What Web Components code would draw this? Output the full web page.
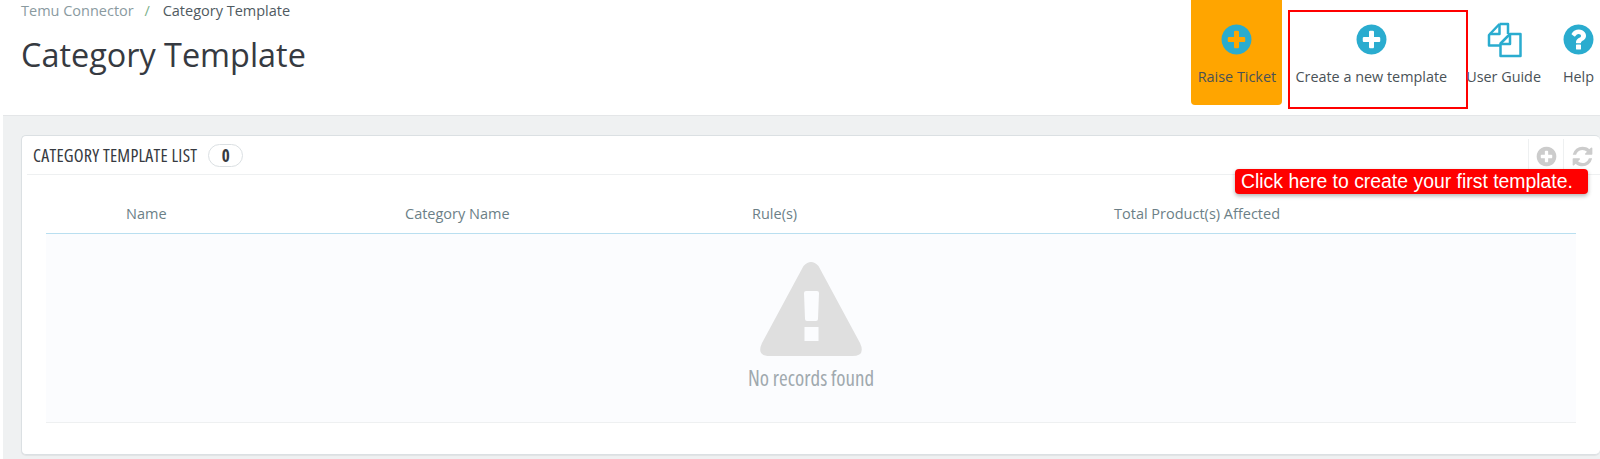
<!DOCTYPE html>
<html>
<head>
<meta charset="utf-8">
<title>Category Template</title>
<style>
  html, body { margin: 0; height: 459px; overflow: hidden; background: #fff; }
  body { font-family: "Open Sans", sans-serif; color: #363a41; }
</style>
</head>
<body>
<page-header heading="Category Template">
  <toolbar-button label="Raise Ticket" icon="plus" orange></toolbar-button>
  <toolbar-button label="Create a new template" icon="plus" highlight></toolbar-button>
  <toolbar-button label="User Guide" icon="docs"></toolbar-button>
  <toolbar-button label="Help" icon="help"></toolbar-button>
</page-header>
<page-body>
  <list-panel heading="CATEGORY TEMPLATE LIST" count="0" hint="Click here to create your first template.">
    <list-table>
      <span>Name</span><span>Category Name</span><span>Rule(s)</span><span>Total Product(s) Affected</span>
      <empty-state slot="empty">No records found</empty-state>
    </list-table>
  </list-panel>
</page-body>

<script>
// font-awesome 4 shapes, 1792 box
const BLUE = "#2aaccf";
const PLUS_D = "M1344 960v-128q0-26-19-45t-45-19h-256v-256q0-26-19-45t-45-19h-128q-26 0-45 19t-19 45v256h-256q-26 0-45 19t-19 45v128q0 26 19 45t45 19h256v256q0 26 19 45t45 19h128q26 0 45-19t19-45v-256h256q26 0 45-19t19-45zm320-64q0 209-103 385.500t-279.500 279.500-385.500 103-385.500-103-279.500-279.500-103-385.500 103-385.500 279.500-279.500 385.500-103 385.500 103 279.500 279.500 103 385.500z";
const ICONS = {
  plus: `<svg viewBox="0 0 1792 1792" width="35" height="35"><path fill="${BLUE}" d="${PLUS_D}"/></svg>`,
  help: `<svg viewBox="0 0 1792 1792" width="35" height="35"><path fill="${BLUE}" d="M1024 1376v-192q0-14-9-23t-23-9h-192q-14 0-23 9t-9 23v192q0 14 9 23t23 9h192q14 0 23-9t9-23zm256-672q0-88-55.500-163t-138.500-116-170-41q-243 0-371 213-15 24 8 42l132 100q7 6 19 6 16 0 25-12 53-68 86-92 34-24 86-24 48 0 85.500 26t37.500 59q0 38-20 61t-68 45q-63 28-115.500 86.500t-52.500 125.500v36q0 14 9 23t23 9h192q14 0 23-9t9-23q0-19 21.500-49.500t54.500-49.500q32-18 49-28.500t46-35 44.500-48 28-60.500 12.500-81zm384 192q0 209-103 385.500t-279.500 279.500-385.500 103-385.500-103-279.500-279.500-103-385.500 103-385.500 279.500-279.500 385.500-103 385.500 103 279.500 279.500 103 385.500z"/></svg>`,
  docs: `<svg viewBox="0 0 36 36" width="36" height="36"><g fill="none" stroke="${BLUE}" stroke-width="2.500" stroke-linejoin="round"><path d="M13.500 2h8.500v10M13.500 2l-10.500 11v10.500h11"/><path d="M13.500 2.500v9.500h-10"/><path d="M24 12h10.500v22h-20v-12.500l9.500-9.500z"/><path d="M24 12.500v9.500h-9.500"/></g></svg>`,
  refresh: `<svg viewBox="0 0 1792 1792" width="23" height="23"><path fill="#ccc" d="M1639 1056q0 5-1 7-64 268-268 434.500t-478 166.500q-146 0-282.500-55t-243.500-157l-129 129q-19 19-45 19t-45-19-19-45v-448q0-26 19-45t45-19h448q26 0 45 19t19 45-19 45l-137 137q71 66 161 102t187 36q134 0 250-65t186-179q11-17 53-117 8-23 30-23h192q13 0 22.500 9.500t9.500 22.500zm25-800v448q0 26-19 45t-45 19h-448q-26 0-45-19t-19-45 19-45l138-138q-148-137-349-137-134 0-250 65t-186 179q-11 17-53 117-8 23-30 23h-199q-13 0-22.500-9.500t-9.500-22.500v-7q65-268 270-434.500t480-166.500q146 0 284 55.500t245 156.500l130-129q19-19 45-19t45 19 19 45z"/></svg>`,
  plusGrey: `<svg viewBox="0 0 1792 1792" width="23" height="23"><path fill="#ccc" d="${PLUS_D}"/></svg>`
};

class PageHeader extends HTMLElement {
  connectedCallback() {
    this.attachShadow({ mode: "open" });
    const heading = this.getAttribute("heading");
    this.shadowRoot.innerHTML = `
    <style>
      :host { display: flex; height: 115px; border-bottom: 1px solid #e4e6e8; justify-content: space-between; margin-left: 3px; }
      .left { padding: 1px 0 0 18px; }
      .crumb { font-size: 14.5px; line-height: 20px; color: #8a9a9f; white-space: nowrap; }
      .crumb i { font-style: normal; color: #7cb08a; margin: 0 8px 0 7px; }
      .crumb b { font-weight: 400; color: #4f5a5f; margin-left: 1px; }
      h1 { margin: 13px 0 0; font-size: 32.4px; font-weight: 400; line-height: 40px; color: #363a41; white-space: nowrap; }
      .tools { display: flex; }
    </style>
    <div class="left">
      <div class="crumb">Temu Connector <i>/</i> <b>${heading}</b></div>
      <h1>${heading}</h1>
    </div>
    <div class="tools"><slot></slot></div>`;
  }
}
customElements.define("page-header", PageHeader);

class ToolbarButton extends HTMLElement {
  connectedCallback() {
    this.attachShadow({ mode: "open" });
    const icon = ICONS[this.getAttribute("icon")];
    this.shadowRoot.innerHTML = `
    <style>
      :host { display: flex; flex-direction: column; align-items: center; position: relative; height: 105px; padding: 22px 10px 0 10px; box-sizing: border-box; font-size: 14.400px; color: #4a5257; white-space: nowrap; }
      :host([orange]) { background: #ffa500; border-radius: 0 0 4px 4px; width: 91px; margin-right: 3px; padding: 22px 0 0; }
      :host([icon="docs"]) { padding-left: 9px; }
      :host([icon="help"]) { padding-right: 4px; }
      .ico { height: 35px; }
      svg { display: block; }
      .lbl { margin-top: 8px; line-height: 24px; }
      .mark { position: absolute; left: 3px; top: 10px; width: 180px; height: 99px; border: 2px solid #f00; box-sizing: border-box; }
    </style>
    <div class="ico">${icon}</div>
    <div class="lbl">${this.getAttribute("label")}</div>
    ${this.hasAttribute("highlight") ? '<div class="mark"></div>' : ""}`;
  }
}
customElements.define("toolbar-button", ToolbarButton);

class PageBody extends HTMLElement {
  constructor() {
    super();
    this.attachShadow({ mode: "open" }).innerHTML = `
    <style>
      :host { display: block; height: 343px; background: #eff1f2; margin-left: 3px; padding: 19px 0 0 18px; box-sizing: border-box; }
    </style>
    <slot></slot>`;
  }
}
customElements.define("page-body", PageBody);

class ListPanel extends HTMLElement {
  connectedCallback() {
    this.attachShadow({ mode: "open" });
    this.shadowRoot.innerHTML = `
    <style>
      :host { display: block; position: relative; height: 320px; background: #fff; border: 1px solid #dbe0e3; border-right: 0; border-radius: 5px; box-sizing: border-box; box-shadow: 0 1px 1px rgba(0,0,0,.06); }
      .head { display: flex; align-items: center; height: 38px; margin-left: 5px; border-bottom: 1px solid #eef0f1; padding-left: 6px; }
      .title { font-family: "Open Sans", sans-serif; font-stretch: 76%; font-size: 18px; letter-spacing: .23px; color: #363a41; white-space: nowrap; }
      .count { margin-left: 11px; width: 33px; height: 21px; border: 1px solid #dbe0e3; border-radius: 12px; text-align: center; line-height: 21px; font-stretch: 75%; font-weight: 700; font-size: 17px; color: #363a41; }
      .acts { margin-left: auto; display: flex; align-self: stretch; padding-top: 3px; box-sizing: border-box; }
      .acts div { width: 34px; height: 34px; border-left: 1px solid #eef0f1; display: flex; align-items: center; justify-content: center; }
      .acts div:last-child { width: 36px; }
      .hint { position: absolute; left: 1213px; top: 33px; width: 353px; height: 25px; background: #f00; color: #fff; border-radius: 4px; box-shadow: 0 2px 4px rgba(0,0,0,.3); font: 19.400px/25px "Liberation Sans", sans-serif; padding-left: 6px; box-sizing: border-box; white-space: nowrap; }
      .body { padding: 0 24px; }
    </style>
    <div class="head">
      <span class="title">${this.getAttribute("heading")}</span>
      <span class="count">${this.getAttribute("count")}</span>
      <div class="acts"><div>${ICONS.plusGrey}</div><div>${ICONS.refresh}</div></div>
    </div>
    <div class="body"><slot></slot></div>
    <div class="hint">${this.getAttribute("hint")}</div>`;
  }
}
customElements.define("list-panel", ListPanel);

class ListTable extends HTMLElement {
  constructor() {
    super();
    this.attachShadow({ mode: "open" }).innerHTML = `
    <style>
      :host { display: block; }
      .cols { display: grid; grid-template-columns: 359px 347px 362px 1fr; height: 59px; padding-top: 18px; box-sizing: border-box; border-bottom: 1px solid #b9dff0; font-size: 14.500px; line-height: 41px; color: #6c7f87; }
      ::slotted(span) { padding-left: 80px; }
      ::slotted(span:not(:first-child)) { padding-left: 0; }
      .empty { height: 188px; background: #fbfcfe; border-bottom: 1px solid #eef0f1; }
    </style>
    <div class="cols"><slot></slot></div>
    <div class="empty"><slot name="empty"></slot></div>`;
  }
}
customElements.define("list-table", ListTable);

class EmptyState extends HTMLElement {
  constructor() {
    super();
    this.attachShadow({ mode: "open" }).innerHTML = `
    <style>
      :host { display: flex; flex-direction: column; align-items: center; padding-top: 27px; font-stretch: 75%; font-size: 21px; line-height: 24px; color: #a0a9ae; white-space: nowrap; }
      svg { display: block; margin-bottom: 9px; }
    </style>
    <svg viewBox="0 0 104 96" width="104" height="96">
      <path fill="#dfdfdf" fill-rule="evenodd" d="M44.500 5 Q52 -3 59.500 5 L101 82 Q107 95 93 95 L11 95 Q-3 95 3 82 Z M45 32 Q45 30 47 30 L58 30 Q60 30 60 32 L59 58 Q59 60 57 60 L48 60 Q46 60 46 58 Z M45.500 66 L59.500 66 L59.500 80 L45.500 80 Z"/>
    </svg>
    <slot></slot>`;
  }
}
customElements.define("empty-state", EmptyState);
</script>
</body>
</html>
